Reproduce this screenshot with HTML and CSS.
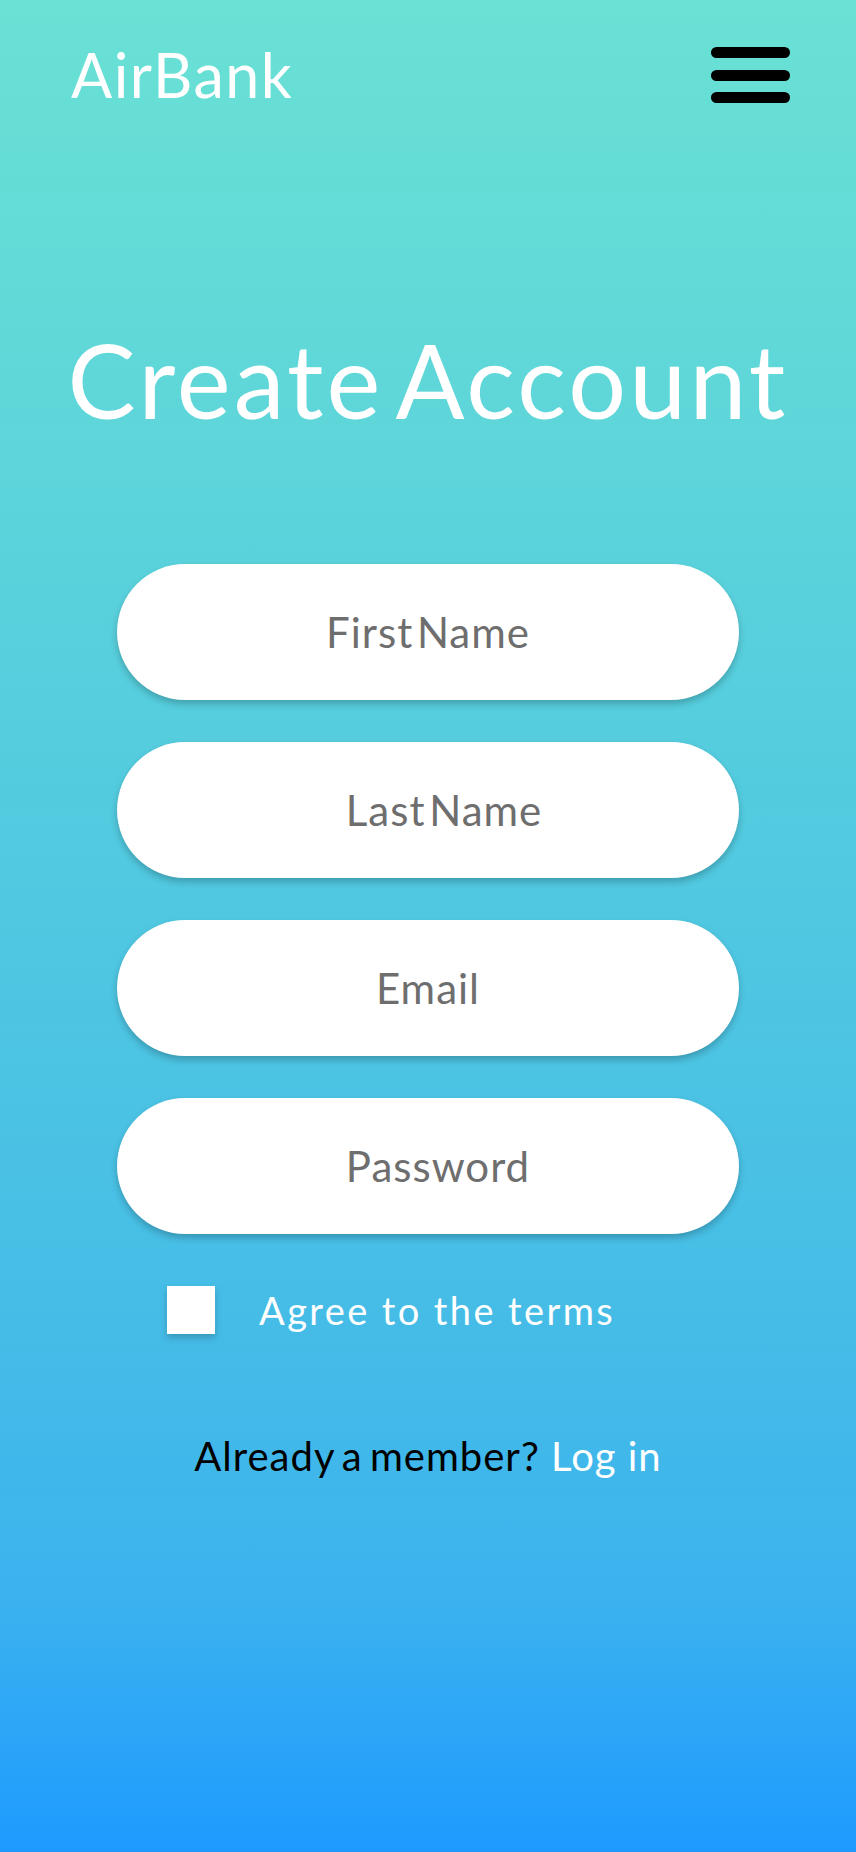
FILE: index.html
```html
<!DOCTYPE html>
<html lang="en">
<head>
<meta charset="utf-8">
<title>AirBank - Create Account</title>
<link rel="stylesheet" href="styles.css">
</head>
<body>
<div class="page">
  <header class="topbar">
    <div class="brand">AirBank</div>
    <button class="menu" aria-label="Menu">
      <span class="bar"></span>
      <span class="bar"></span>
      <span class="bar"></span>
    </button>
  </header>

  <h1 class="title">Create Account</h1>

  <form class="form">
    <input class="field" type="text" placeholder="First Name">
    <input class="field field-shift-lg" type="text" placeholder="Last Name">
    <input class="field" type="email" placeholder="Email">
    <input class="field field-shift-md" type="password" placeholder="Password">

    <label class="terms">
      <span class="box"></span>
      <span class="terms-text">Agree to the terms</span>
    </label>

    <p class="member"><span class="member-q">Already a member?</span> <a class="login" href="#">Log in</a></p>
  </form>
</div>
</body>
</html>
```

FILE: styles.css
```css
html, body {
  margin: 0;
  padding: 0;
}

body {
  font-family: Lato, "Open Sans", sans-serif;
  width: 856px;
  min-height: 1852px;
  background: linear-gradient(to bottom,
    #69e1d4 0%,
    #5dd5da 25%,
    #50c8e1 49%,
    #46bde6 70%,
    #3cb3ee 86%,
    #1e9aff 100%);
}

.page {
  min-height: 1852px;
  display: flex;
  flex-direction: column;
}

.topbar {
  display: flex;
  justify-content: space-between;
  align-items: flex-start;
  padding: 44px 66px 0 71px;
}

.brand {
  color: #ffffff;
  font-size: 61px;
  line-height: 61px;
  letter-spacing: 1.5px;
}

.menu {
  margin-top: 3px;
  padding: 0;
  border: 0;
  background: transparent;
  display: flex;
  flex-direction: column;
  gap: 11.5px;
  cursor: pointer;
}

.bar {
  display: block;
  width: 79px;
  height: 11px;
  border-radius: 6px;
  background: #000000;
}

.title {
  margin: 224px 0 0 0;
  text-align: center;
  color: #ffffff;
  font-weight: 400;
  font-size: 102px;
  line-height: 102px;
  letter-spacing: 3.2px;
  word-spacing: -14px;
}

.form {
  width: 622px;
  margin: 133px auto 0;
  display: flex;
  flex-direction: column;
  gap: 42px;
}

.field {
  box-sizing: border-box;
  width: 622px;
  height: 136px;
  border: 0;
  border-radius: 68px;
  background: #ffffff;
  box-shadow: 0 4px 7px rgba(0, 0, 0, 0.22);
  font-family: inherit;
  font-size: 42px;
  color: #555555;
  text-align: center;
  letter-spacing: 1px;
  word-spacing: -8px;
  outline: none;
  padding: 0;
}

.field::placeholder {
  color: #6e6e6e;
  opacity: 1;
}

.field-shift-lg {
  padding-left: 32px;
}

.field-shift-md {
  padding-left: 20px;
}

.terms {
  display: flex;
  align-items: center;
  gap: 44px;
  padding-left: 50px;
  margin-top: 10px;
}

.box {
  width: 48px;
  height: 48px;
  background: #ffffff;
  box-shadow: 0 4px 7px rgba(0, 0, 0, 0.2);
  flex: none;
}

.terms-text {
  color: #ffffff;
  font-size: 38px;
  line-height: 48px;
  letter-spacing: 2.4px;
}

.member {
  margin: 60px 0 0 0;
  text-align: center;
  font-size: 40px;
  line-height: 40px;
  color: #000000;
  letter-spacing: 1px;
}

.member-q {
  word-spacing: -4px;
}

.login {
  color: #ffffff;
  text-decoration: none;
}
```
